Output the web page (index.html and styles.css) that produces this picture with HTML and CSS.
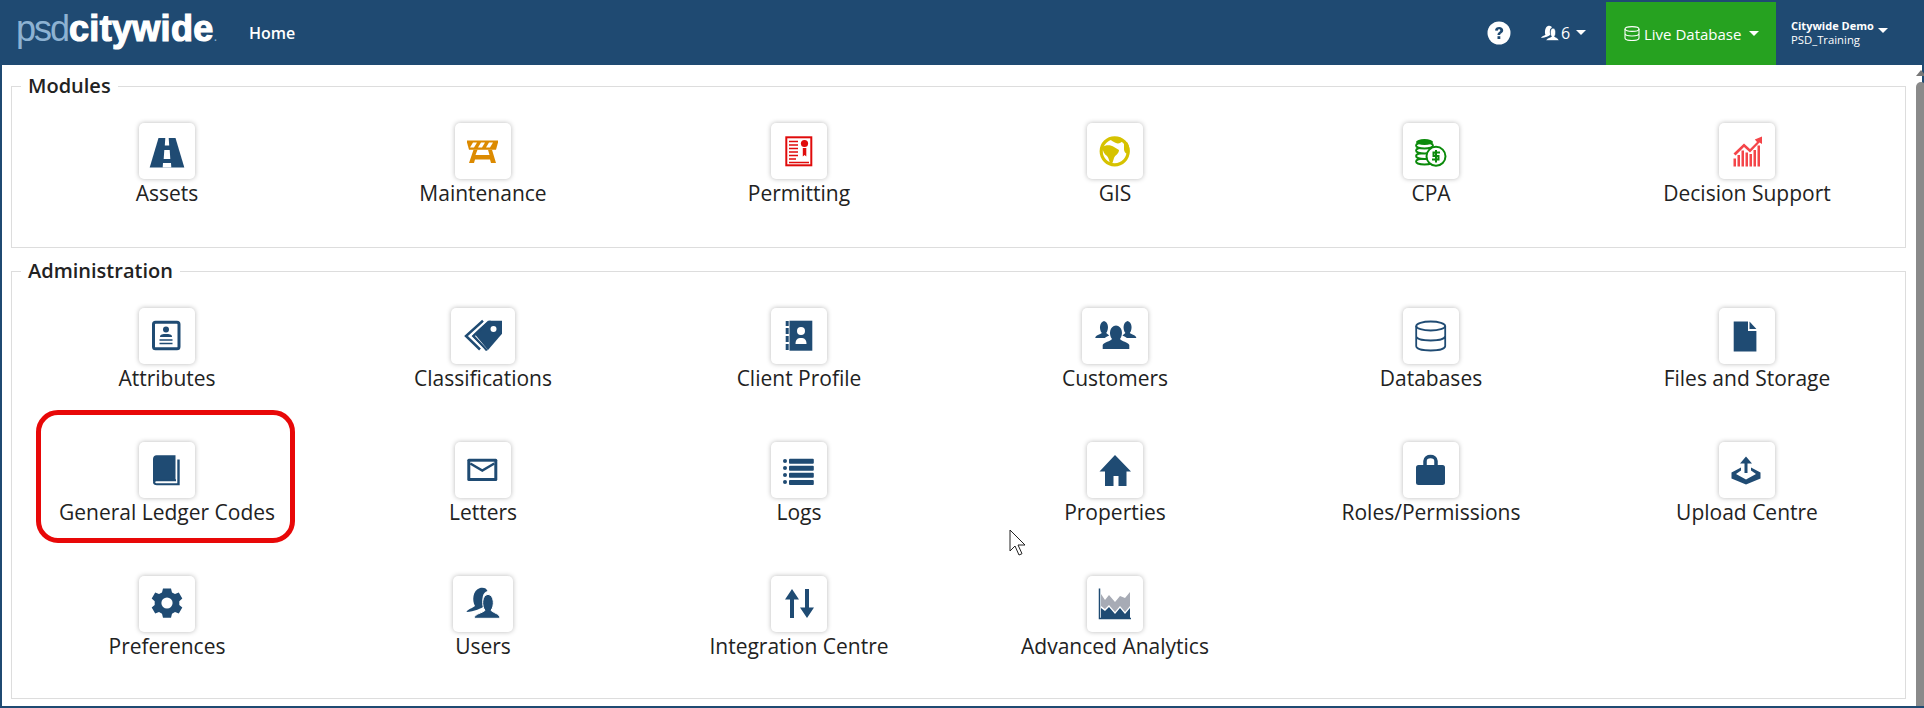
FILE: index.html
```html
<!DOCTYPE html>
<html lang="en">
<head>
    <meta charset="UTF-8">
    <title>Citywide</title>
    <link rel="stylesheet" href="styles.css">
</head>
<body>
    <header class="navbar">
        <a class="brand"><span class="brand-psd">psd</span><span class="brand-city">citywide</span><span class="brand-dot">.</span></a>
        <a class="nav-home">Home</a>
        <div class="nav-right">
            <svg class="nav-help" width="24" height="24" viewBox="0 0 24 24"><circle cx="12" cy="12" r="11.5" fill="#fff"/><path d="M8 9.5C8 7 10 6 12.2 6c2.4 0 4 1.4 4 3.3 0 2.9-3 2.8-3 4.7h-2.7c0-3.2 2.8-3.100 2.800-4.600 0-.8-.5-1.200-1.200-1.200-.8 0-1.300.6-1.400 1.500z" fill="#1f4a72"/><rect x="10.500" y="15.200" width="2.800" height="2.800" fill="#1f4a72"/></svg>
            <div class="nav-users">
                <svg width="18" height="16" viewBox="0 0 18 16"><path d="M0 13c1-2 3-2 4.500-3.200C3.500 8 3.800 2 7 1c2-.6 3.500.3 4 1.500-2 .5-2.800 4-1.500 7-1.500 1.800-5 3-9.500 3.500z" fill="#fff"/><path d="M5 15.500c.5-2.500 4-2.800 5.500-4-1.700-2-1.700-8 1.500-8.500 3.200.5 3.200 6.500 1.500 8.500 1.500 1.200 3.800 1.500 4.500 4z" fill="#fff" stroke="#1f4a72" stroke-width=".6"/></svg>
                <span>6</span><i class="caret"></i>
            </div>
            <div class="nav-db">
                <svg width="16" height="15" viewBox="0 0 16 15" fill="none" stroke="#fff" stroke-width="1.100"><ellipse cx="8" cy="3" rx="7" ry="2.400"/><path d="M1 3v9c0 1.500 3 2.500 7 2.500s7-1 7-2.500V3M1 7.500C1 9 4 10 8 10s7-1 7-2.500"/></svg>
                <span>Live Database</span><i class="caret"></i>
            </div>
            <div class="nav-user">
                <div class="nav-user-text">
                    <strong>Citywide Demo</strong>
                    <span>PSD_Training</span>
                </div>
                <i class="caret"></i>
            </div>
        </div>
    </header>

    <div class="page">
        <main class="content">
            <fieldset class="group group-modules">
                <legend>Modules</legend>
                <div class="tiles">
                    <a class="tile">
                        <span class="tile-box">
                            <svg viewBox="0 0 56 56"><path d="M19.500 15h17L45.300 44.500H10.700z" fill="#1f4b73"/><path d="M26.300 15h3.400l.5 7.500h-4.400zM25.300 27h5.400l.6 9h-6.600zM24 40h8l.3 4.500h-8.600z" fill="#fff"/></svg>
                        </span>
                        <span class="tile-label">Assets</span>
                    </a>
                    <a class="tile">
                        <span class="tile-box">
                            <svg viewBox="0 0 56 56"><path d="M12 17.500h31v2l-2 7.300H14l-2-7.300z" fill="#dc8a00"/><path d="M18 19.500h4l-3 5h-4zM26 19.500h4l-3 5h-4zM34 19.500h4l-3 5h-4z" fill="#fff"/><path d="M18.500 26.800h4l-2 5.200h14l-1.500-5.200h4l4 13.200h-5l-1-3.500H20l-1 3.500h-5z" fill="#dc8a00"/></svg>
                        </span>
                        <span class="tile-label">Maintenance</span>
                    </a>
                    <a class="tile">
                        <span class="tile-box">
                            <svg viewBox="0 0 56 56"><rect x="15.300" y="14.300" width="25" height="28" fill="none" stroke="#e00b0b" stroke-width="2"/><path d="M18 18.500h9M18 22h9M18 25.500h9M18 29h9M18 32.500h9M18 36h7M18 39.500h20" stroke="#e00b0b" stroke-width="1.500"/><circle cx="33.500" cy="20.500" r="3.600" fill="#e00b0b"/><path d="M31.800 25h3.500v8.500l-1.700-1.500-1.800 1.500z" fill="#e00b0b"/></svg>
                        </span>
                        <span class="tile-label">Permitting</span>
                    </a>
                    <a class="tile">
                        <span class="tile-box">
                            <svg viewBox="0 0 56 56"><circle cx="27.700" cy="28.300" r="13.500" fill="#fff" stroke="#d6c200" stroke-width="3.200"/><path d="M15.500 24C19 21.500 24 22 27 24L32 27C32 31 28 32 27 35 26 38 25.500 41 24 41.500 22 39 22 35 20 33 17.500 31.500 15.500 28 15.500 24zM22 15.500C26 13.500 32 14 36 17 35 20 31 21 29 20 26 19 24 17 22 15.500zM37 20L40 19C42.500 23 43 27 42 31 39 31 37 29 37 26z" fill="#d6c200"/></svg>
                        </span>
                        <span class="tile-label">GIS</span>
                    </a>
                    <a class="tile">
                        <span class="tile-box">
                            <svg viewBox="0 0 56 56"><g fill="#fff" stroke="#0a8a0a" stroke-width="1.800"><ellipse cx="21.500" cy="38.500" rx="8.500" ry="3"/><ellipse cx="21.500" cy="33" rx="8.500" ry="3"/><ellipse cx="21.500" cy="27.500" rx="8.500" ry="3"/><ellipse cx="21.500" cy="22.500" rx="8.500" ry="3"/></g><ellipse cx="21.500" cy="19" rx="8.500" ry="3" fill="#0a8a0a"/><circle cx="33" cy="33.300" r="9.500" fill="#fff" stroke="#0a8a0a" stroke-width="2"/><path d="M37 29.500h-6.500v3.500h5v3.500H29M33 27v12.500" fill="none" stroke="#0a8a0a" stroke-width="2"/></svg>
                        </span>
                        <span class="tile-label">CPA</span>
                    </a>
                    <a class="tile">
                        <span class="tile-box">
                            <svg viewBox="0 0 56 56"><path d="M14.500 43.500V35.500h2.500v8zM18.500 43.500V32h2.500v11.500zM22.500 43.500V27.500h2.500v16zM26.500 43.500V29.500h2.500v14zM30.500 43.500V31h2.500v12.500zM34.500 43.500V27h2.500v16.500zM38.500 43.500V22.500h2.500v21z" fill="#f44549"/><path d="M14.500 30.500L25 20.500 31 26 38 19 35.800 16.500 43 13.500V21L40.500 19.500 31 29.500 25 24 16.500 32.500z" fill="#f44549"/></svg>
                        </span>
                        <span class="tile-label">Decision Support</span>
                    </a>
                </div>
            </fieldset>

            <fieldset class="group group-admin">
                <legend>Administration</legend>
                <div class="tiles">
                    <a class="tile">
                        <span class="tile-box">
                            <svg viewBox="0 0 56 56"><rect x="14.500" y="14.200" width="25.500" height="26.600" rx="2" fill="none" stroke="#1f4b73" stroke-width="3"/><circle cx="27" cy="21.500" r="3" fill="#1f4b73"/><path d="M21 29c0-3 3-3 6-3s6 0 6 3z" fill="#1f4b73"/><path d="M20.500 32h13M20.500 35.500h13" stroke="#1f4b73" stroke-width="1.500"/></svg>
                        </span>
                        <span class="tile-label">Attributes</span>
                    </a>
                    <a class="tile">
                        <span class="tile-box box-64">
                            <svg viewBox="0 0 64 56"><path d="M24 26.500L38 12.700h13v13L37 42z" fill="#1f4b73"/><circle cx="42.500" cy="21" r="3" fill="#fff"/><path d="M32 12.700L15 28l14 13.500" fill="none" stroke="#1f4b73" stroke-width="2.500"/><path d="M37 12.700H40L24 28l13 14-2 1-15-15z" fill="#1f4b73"/><path d="M35 12.700L19.500 28 33 42" fill="none" stroke="#fff" stroke-width="1.500"/></svg>
                        </span>
                        <span class="tile-label">Classifications</span>
                    </a>
                    <a class="tile">
                        <span class="tile-box">
                            <svg viewBox="0 0 56 56"><rect x="18.500" y="12.700" width="22.800" height="30" fill="#1f4b73"/><path d="M14.700 13h3v5h-3zM14.700 20h3v6h-3zM14.700 28h3v6h-3zM14.700 36h3v6h-3z" fill="#1f4b73"/><circle cx="30" cy="23" r="4" fill="#fff"/><path d="M24.500 36c0-5 2.500-6 5.500-6s5.500 1 5.500 6z" fill="#fff"/></svg>
                        </span>
                        <span class="tile-label">Client Profile</span>
                    </a>
                    <a class="tile">
                        <span class="tile-box box-66">
                            <svg viewBox="0 0 66 56"><g fill="#1f4b73"><path d="M13.300 30c0-3 5-3.500 6.500-5-3-4-2.200-11 2.200-12 4.500 1 5.200 8 2.200 12 1 1 2 1.500 3 2.500-2 .8-3.500 1.700-4.500 2.500z"/><path d="M54.300 30c0-3-5-3.500-6.500-5 3-4 2.200-11-2.200-12-4.500 1-5.200 8-2.200 12-1 1-2 1.500-3 2.500 2 .8 3.500 1.700 4.500 2.500z"/><path d="M20.700 41v-4c1-3 8-3.500 9.300-6-3.500-4.500-2.500-13 4-13.500 6.500.5 7.500 9 4 13.500 1.300 2.500 8.300 3 9.300 6v4z"/></g></svg>
                        </span>
                        <span class="tile-label">Customers</span>
                    </a>
                    <a class="tile">
                        <span class="tile-box">
                            <svg viewBox="0 0 56 56" fill="none" stroke="#1f4b73" stroke-width="1.800"><ellipse cx="27.700" cy="18" rx="14.500" ry="4.500"/><path d="M13.200 18v20c0 2.800 6.500 4.500 14.500 4.500s14.500-1.700 14.500-4.500V18M13.200 28c0 2.800 6.500 4.500 14.500 4.500s14.500-1.700 14.500-4.500"/></svg>
                        </span>
                        <span class="tile-label">Databases</span>
                    </a>
                    <a class="tile">
                        <span class="tile-box">
                            <svg viewBox="0 0 56 56"><path d="M14.700 13.500h14.300v9.500h8.400v20.400H14.700z" fill="#1f4b73"/><path d="M30.500 13.500l6.900 7.500h-6.900z" fill="#1f4b73"/></svg>
                        </span>
                        <span class="tile-label">Files and Storage</span>
                    </a>

                    <a class="tile">
                        <span class="tile-box">
                            <svg viewBox="0 0 56 56"><path d="M14 17c0-2 1.500-3.700 3.500-3.700h19v25H17.500c-2 0-3.500 1-3.500 2z" fill="#1f4b73"/><path d="M38.300 17.500h2.400v25.800H18c-2.500 0-4-1.300-4-3s1.500-3 4-3h19v2H18c-1 0-1.800.4-1.800 1s.8 1 1.800 1h20.300z" fill="#1f4b73"/></svg>
                        </span>
                        <span class="tile-label">General Ledger Codes</span>
                    </a>
                    <a class="tile">
                        <span class="tile-box">
                            <svg viewBox="0 0 56 56"><rect x="12.300" y="16.700" width="30" height="22.300" rx="1.500" fill="#1f4b73"/><rect x="15.300" y="19.700" width="24" height="16.300" fill="#fff"/><path d="M15.300 21.500l12 7 12-7" fill="none" stroke="#1f4b73" stroke-width="2.500"/></svg>
                        </span>
                        <span class="tile-label">Letters</span>
                    </a>
                    <a class="tile">
                        <span class="tile-box">
                            <svg viewBox="0 0 56 56"><g fill="#1f4b73"><circle cx="14" cy="19" r="2"/><circle cx="14" cy="26" r="2"/><circle cx="14" cy="33" r="2"/><circle cx="14" cy="40" r="2"/><rect x="18" y="16.700" width="24.800" height="5" rx="1"/><rect x="18" y="23.700" width="24.800" height="5" rx="1"/><rect x="18" y="30.700" width="24.800" height="5" rx="1"/><rect x="18" y="38" width="24.800" height="5" rx="1"/></g></svg>
                        </span>
                        <span class="tile-label">Logs</span>
                    </a>
                    <a class="tile">
                        <span class="tile-box">
                            <svg viewBox="0 0 56 56"><path d="M28 13L44 29.500h-4.500V44H31.500V34h-5v10H18V29.500h-5.500z" fill="#1f4b73"/></svg>
                        </span>
                        <span class="tile-label">Properties</span>
                    </a>
                    <a class="tile">
                        <span class="tile-box">
                            <svg viewBox="0 0 56 56"><path d="M22 24v-5c0-6 11-6 11 0v5" fill="none" stroke="#1f4b73" stroke-width="3.500"/><rect x="13" y="23" width="29" height="20" rx="2.500" fill="#1f4b73"/></svg>
                        </span>
                        <span class="tile-label">Roles/Permissions</span>
                    </a>
                    <a class="tile">
                        <span class="tile-box">
                            <svg viewBox="0 0 56 56"><path d="M27 14.500l6 7h-4.500v9.500h-3v-9.500H21z" fill="#1f4b73"/><path d="M22 25.500v3l-5 3.500 10 5.500 10-5.500-5-3.500v-3l9.500 5v6L27 42.500 12.500 36.500v-6z" fill="#1f4b73"/></svg>
                        </span>
                        <span class="tile-label">Upload Centre</span>
                    </a>

                    <a class="tile">
                        <span class="tile-box">
                            <svg viewBox="0 0 56 56"><path d="M24 12.500h8l1 4 3 1.600 3.800-1.500 3.500 6-3 2.700v3.600l3 2.700-3.500 6-3.800-1.500-3 1.600-1 4h-8l-1-4-3-1.600-3.800 1.500-3.500-6 3-2.700v-3.600l-3-2.700 3.500-6 3.800 1.500 3-1.600z" fill="#1f4b73"/><circle cx="28" cy="27" r="5.600" fill="#fff"/></svg>
                        </span>
                        <span class="tile-label">Preferences</span>
                    </a>
                    <a class="tile">
                        <span class="tile-box box-60">
                            <svg viewBox="0 0 60 56"><path d="M13.500 36c1-3 6-3.500 8.500-6-3-5-2.500-16 5-18 4-.8 6.500.5 7.500 3-5 1-6.500 9-3.500 15-2 2.500-10 5.500-17.500 6z" fill="#1f4b73"/><path d="M21 42.300c1-5 8.500-5 11-8-3.500-4-3.500-15 3-16 6.500 1 6.500 12 3 16 2.500 3 8.500 3 9 8z" fill="#1f4b73" stroke="#fff" stroke-width="1"/></svg>
                        </span>
                        <span class="tile-label">Users</span>
                    </a>
                    <a class="tile">
                        <span class="tile-box">
                            <svg viewBox="0 0 56 56"><path d="M21 13l7 10.500h-5V42h-4V23.500h-5z" fill="#1f4b73"/><path d="M34 13h4v18.500h5L36 42l-7-10.500h5z" fill="#1f4b73"/></svg>
                        </span>
                        <span class="tile-label">Integration Centre</span>
                    </a>
                    <a class="tile">
                        <span class="tile-box">
                            <svg viewBox="0 0 56 56"><path d="M14 18L18 24 22 19 28 26 33 20 38 22 43 16V30L38 36 33 30 28 36 22 29 18 33 14 30z" fill="#a7abb5"/><path d="M14 32L18 35 22 31 28 38 33 32 38 38 43 32V42H14z" fill="#1f4b73"/><path d="M12.500 12.500V42.500H44" fill="none" stroke="#1f4b73" stroke-width="1.500"/></svg>
                        </span>
                        <span class="tile-label">Advanced Analytics</span>
                    </a>
                </div>
            </fieldset>
        </main>
        <div class="scrollbar">
            <i class="scroll-up"></i>
            <div class="scroll-thumb"></div>
        </div>
    </div>

    <div class="highlight"></div>
    <svg class="pointer" width="20" height="28" viewBox="0 0 20 28"><path d="M1 1v21l5-5 4 9 3-1.300-4-8.700h7z" fill="#fff" stroke="#222" stroke-width="1"/></svg>
</body>
</html>
```

FILE: styles.css
```css
* {
    box-sizing: border-box;
}
html, body {
    height: 100%;
}
body {
    margin: 0;
    overflow: hidden;
    background: #1f4a72;
    font-family: "Open Sans", "Noto Sans", sans-serif;
    color: #222;
}

/* top bar */
.navbar {
    display: flex;
    align-items: center;
    height: 65px;
    background: #1f4a72;
    color: #fff;
}
.brand {
    width: 249px;
    padding-left: 16px;
    font-family: "Liberation Sans", Arial, sans-serif;
    font-size: 36px;
    line-height: 65px;
    white-space: nowrap;
}
.brand-psd {
    color: #8db2d2;
    letter-spacing: -2px;
    margin-right: 1px;
}
.brand-city {
    font-weight: 700;
    letter-spacing: .3px;
    color: #fff;
    -webkit-text-stroke: 1.2px #fff;
}
.brand-dot {
    font-size: 14px;
    color: #8db2d2;
}
.nav-home {
    font-size: 16px;
    font-weight: 600;
}
.nav-right {
    display: flex;
    align-items: center;
    margin-left: auto;
    height: 65px;
}
.nav-help {
    margin-right: 30px;
}
.nav-users {
    display: flex;
    align-items: center;
    gap: 2px;
    width: 65px;
    font-size: 16px;
}
.caret {
    display: inline-block;
    width: 0;
    height: 0;
    margin-left: 4px;
    border-top: 5px solid #fff;
    border-left: 5px solid transparent;
    border-right: 5px solid transparent;
}
.nav-db {
    display: flex;
    align-items: center;
    gap: 4px;
    width: 170px;
    height: 63px;
    margin-top: 2px;
    padding-left: 18px;
    background: #26a220;
    font-size: 15px;
}
.nav-user {
    display: flex;
    align-items: center;
    width: 148px;
    padding-left: 15px;
}
.nav-user-text {
    display: flex;
    flex-direction: column;
    font-size: 11.3px;
    line-height: 14px;
}
.nav-user-text strong {
    font-size: 11px;
}
.nav-user .caret {
    margin-top: -5px;
}

/* page body */
.page {
    display: flex;
    height: 641px;
    margin: 0 2px;
    background: #fff;
}
.content {
    flex: 1;
    padding: 8px 5px 0 9px;
}
.group {
    margin: 0 0 10px;
    padding: 0;
    border: 1px solid #ddd;
    min-width: 0;
}
.group legend {
    margin-left: 9px;
    padding: 0 7px;
    font-size: 20px;
    font-weight: 600;
    line-height: 26px;
}
.group-modules {
    height: 175px;
}
.group-admin {
    height: 441px;
}
.tiles {
    display: grid;
    grid-template-columns: repeat(6, 316px);
    grid-auto-rows: 84px;
    row-gap: 50px;
    margin-left: -3px;
    padding-top: 24px;
}
.tile {
    display: flex;
    flex-direction: column;
    align-items: center;
}
.tile-box {
    display: block;
    width: 56px;
    height: 56px;
    background: #fff;
    border-radius: 5px;
    box-shadow: 0 0 5px rgba(0, 0, 0, .28);
}
.tile-box svg {
    display: block;
    width: 100%;
    height: 100%;
}
.box-60 {
    width: 60px;
}
.box-64 {
    width: 64px;
}
.box-66 {
    width: 66px;
}
.tile-label {
    font-size: 21px;
    line-height: 28px;
    white-space: nowrap;
}

/* scrollbar */
.scrollbar {
    display: flex;
    flex-direction: column;
    align-items: center;
    width: 19px;
    padding: 5px 0 0 5px;
}
.scroll-up {
    width: 0;
    height: 0;
    margin-bottom: 6px;
    border-bottom: 6px solid #777;
    border-left: 5px solid transparent;
    border-right: 5px solid transparent;
}
.scroll-thumb {
    flex: 1;
    width: 10px;
    background: #8a8a8a;
    border-radius: 5px 5px 0 0;
}

/* annotation over the page */
.highlight {
    position: absolute;
    left: 36px;
    top: 410px;
    width: 259px;
    height: 133px;
    border: 5px solid #e80808;
    border-radius: 22px;
}
.pointer {
    position: absolute;
    left: 1009px;
    top: 529px;
}
```
